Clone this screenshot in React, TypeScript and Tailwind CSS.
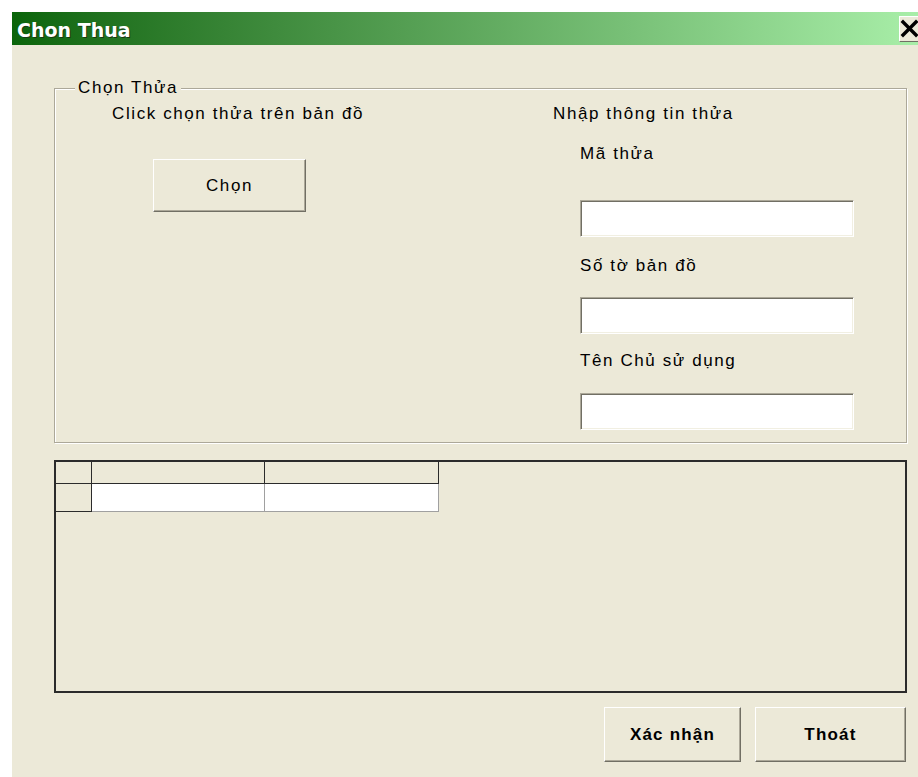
import React from 'react';

// Raised XP-style push button
function PushButton({ label, bold, className }: { label: string; bold?: boolean; className?: string }) {
  return (
    <button
      type="button"
      className={`flex items-center justify-center bg-[#ece9d8] border border-t-white border-l-white border-r-[#716f64] border-b-[#716f64] shadow-[inset_-1px_-1px_0_#aca899] text-black ${bold ? 'font-bold tracking-[1.2px]' : ''} ${className ?? ''}`}
    >
      {label}
    </button>
  );
}

// Sunken single-line text box
function TextBox({ className }: { className?: string }) {
  return (
    <input
      type="text"
      className={`block w-[274px] h-[37px] bg-white border border-t-[#aca899] border-l-[#aca899] border-r-white border-b-white shadow-[inset_1px_1px_0_#716f64,inset_-1px_-1px_0_#f1efe2] outline-none ${className ?? ''}`}
    />
  );
}

function TitleBar() {
  return (
    <div className="h-[33px] flex items-center justify-between bg-linear-to-r from-[#0a650a] to-[#a8eea8]">
      <span className="pl-[5px] pt-[3px] font-['DejaVu_Sans',sans-serif] font-bold text-[19px] tracking-normal text-white [text-shadow:1px_1px_0_#183a12]">
        Chon Thua
      </span>
      <div className="w-[19px] h-[26px] mt-[1px] bg-[#ece9d8] border-t border-l border-t-white border-l-white border-b border-b-[#716f64] overflow-hidden">
        <svg width="19" height="25" viewBox="0 0 19 25">
          <path d="M3 5 L16 18 M16 5 L3 18" stroke="#000" strokeWidth="3.4" strokeLinecap="square" />
        </svg>
      </div>
    </div>
  );
}

function GridView() {
  return (
    <div className="h-[233px] border-2 border-[#2b2b2b]">
      <div className="flex h-[22px]">
        <div className="w-[36px] border-r border-b border-[#2b2b2b]" />
        <div className="w-[173px] border-r border-b border-[#2b2b2b]" />
        <div className="w-[174px] border-r border-b border-[#2b2b2b]" />
      </div>
      <div className="flex h-[28px]">
        <div className="w-[36px] border-r border-b border-[#2b2b2b]" />
        <div className="w-[173px] bg-white border-r border-b border-[#a0a0a0]" />
        <div className="w-[174px] bg-white border-r border-b border-[#a0a0a0]" />
      </div>
    </div>
  );
}

export default function App() {
  return (
    <div className="w-[918px] h-[777px] bg-white pt-[12px] pl-[12px] overflow-hidden font-['Liberation_Sans',Arial,sans-serif] text-[17px] leading-[20px] tracking-[1.6px] text-black">
      <div className="h-full flex flex-col">
        <TitleBar />

        <div className="flex-1 bg-[#ece9d8] pl-[42px] pr-[11px] pt-[43px]">
          {/* Chọn Thửa group */}
          <div className="relative border border-[#aca899] shadow-[inset_1px_1px_0_#fff,1px_1px_0_#fff] pt-[15px] pb-[12px]">
            <span className="absolute -top-[11px] left-[20px] bg-[#ece9d8] px-[3px]">Chọn Thửa</span>
            <div className="flex">
              <div className="w-[498px] pl-[57px]">
                <div>Click chọn thửa trên bản đồ</div>
                <PushButton label="Chọn" className="mt-[35px] ml-[41px] w-[153px] h-[53px]" />
              </div>
              <div>
                <div>Nhập thông tin thửa</div>
                <div className="pl-[27px]">
                  <div className="mt-[20px]">Mã thửa</div>
                  <TextBox className="mt-[36px]" />
                  <div className="mt-[19px]">Số tờ bản đồ</div>
                  <TextBox className="mt-[21px]" />
                  <div className="mt-[17px]">Tên Chủ sử dụng</div>
                  <TextBox className="mt-[22px]" />
                </div>
              </div>
            </div>
          </div>

          <div className="mt-[17px]">
            <GridView />
          </div>

          <div className="mt-[14px] flex justify-end gap-[14px] pr-[1px]">
            <PushButton label="Xác nhận" bold className="w-[137px] h-[55px]" />
            <PushButton label="Thoát" bold className="w-[151px] h-[55px]" />
          </div>
        </div>
      </div>
    </div>
  );
}
